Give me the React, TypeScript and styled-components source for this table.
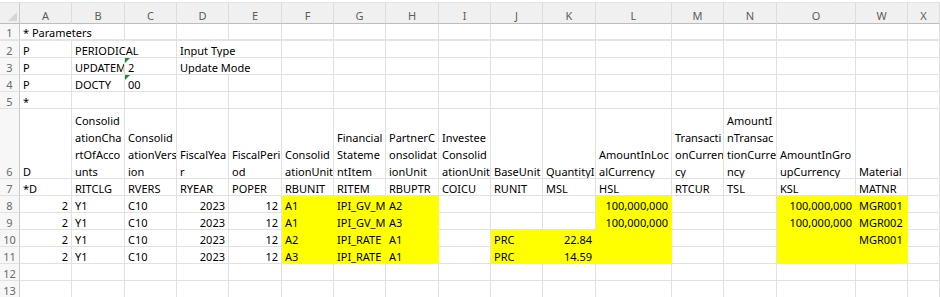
import React from 'react';
import styled, { createGlobalStyle } from 'styled-components';

const GlobalStyle = createGlobalStyle`
  html, body {
    margin: 0;
    padding: 0;
    background: #ffffff;
  }
  body {
    font-family: "Noto Sans", "Noto Sans CJK KR", sans-serif;
  }
`;

const COLS = ['A', 'B', 'C', 'D', 'E', 'F', 'G', 'H', 'I', 'J', 'K', 'L', 'M', 'N', 'O', 'W', 'X'];
const WIDTHS = [52, 53, 52, 52, 53, 52, 52, 53, 52, 52, 53, 76, 52, 53, 79, 52];
const ROW_HEIGHTS = [17, 17, 17, 17, 17, 70, 17, 17, 17, 17, 17, 17, 17];

interface CellData {
  text?: string;
  lines?: string[];
  right?: boolean;
  span?: number;
  fill?: boolean;
  tri?: boolean;
}

type RowData = Record<string, CellData>;

const dataRow = (
  f: string,
  g: string,
  h: string,
  extra: RowData,
): RowData => ({
  A: { text: '2', right: true },
  B: { text: 'Y1' },
  C: { text: 'C10' },
  D: { text: '2023', right: true },
  E: { text: '12', right: true },
  F: { text: f, fill: true },
  G: { text: g, fill: true },
  H: { text: h, fill: true },
  L: { fill: true },
  O: { fill: true },
  W: { fill: true },
  ...extra,
});

const ROWS: RowData[] = [
  { A: { text: '* Parameters', span: 2 } },
  {
    A: { text: 'P' },
    B: { text: 'PERIODICAL', span: 2 },
    D: { text: 'Input Type', span: 2 },
  },
  {
    A: { text: 'P' },
    B: { text: 'UPDATEMODE' },
    C: { text: '2', tri: true },
    D: { text: 'Update Mode', span: 2 },
  },
  {
    A: { text: 'P' },
    B: { text: 'DOCTY' },
    C: { text: '00', tri: true },
  },
  { A: { text: '*' } },
  {
    A: { lines: ['D'] },
    B: { lines: ['Consolid', 'ationCha', 'rtOfAcco', 'unts'] },
    C: { lines: ['Consolid', 'ationVers', 'ion'] },
    D: { lines: ['FiscalYea', 'r'] },
    E: { lines: ['FiscalPeri', 'od'] },
    F: { lines: ['Consolid', 'ationUnit'] },
    G: { lines: ['Financial', 'Stateme', 'ntItem'] },
    H: { lines: ['PartnerC', 'onsolidat', 'ionUnit'] },
    I: { lines: ['Investee', 'Consolid', 'ationUnit'] },
    J: { lines: ['BaseUnit'] },
    K: { lines: ['QuantityInBaseUnit'] },
    L: { lines: ['AmountInLoc', 'alCurrency'] },
    M: { lines: ['Transacti', 'onCurren', 'cy'] },
    N: { lines: ['AmountI', 'nTransac', 'tionCurre', 'ncy'] },
    O: { lines: ['AmountInGro', 'upCurrency'] },
    W: { lines: ['Material'] },
  },
  {
    A: { text: '*D' },
    B: { text: 'RITCLG' },
    C: { text: 'RVERS' },
    D: { text: 'RYEAR' },
    E: { text: 'POPER' },
    F: { text: 'RBUNIT' },
    G: { text: 'RITEM' },
    H: { text: 'RBUPTR' },
    I: { text: 'COICU' },
    J: { text: 'RUNIT' },
    K: { text: 'MSL' },
    L: { text: 'HSL' },
    M: { text: 'RTCUR' },
    N: { text: 'TSL' },
    O: { text: 'KSL' },
    W: { text: 'MATNR' },
  },
  dataRow('A1', 'IPI_GV_MAP', 'A2', {
    L: { text: '100,000,000', right: true, fill: true },
    O: { text: '100,000,000', right: true, fill: true },
    W: { text: 'MGR001', fill: true },
  }),
  dataRow('A1', 'IPI_GV_MAP', 'A3', {
    L: { text: '100,000,000', right: true, fill: true },
    O: { text: '100,000,000', right: true, fill: true },
    W: { text: 'MGR002', fill: true },
  }),
  dataRow('A2', 'IPI_RATE', 'A1', {
    J: { text: 'PRC', fill: true },
    K: { text: '22.84', right: true, fill: true },
    W: { text: 'MGR001', fill: true },
  }),
  dataRow('A3', 'IPI_RATE', 'A1', {
    J: { text: 'PRC', fill: true },
    K: { text: '14.59', right: true, fill: true },
  }),
  {},
  {},
];

const Page = styled.div`
  width: 940px;
  height: 297px;
  overflow: hidden;
  background: #ffffff;
`;

const TabStrip = styled.div`
  height: 3px;
  background: #ffffff;
  border-bottom: 1px solid #e3e3e3;
  box-sizing: border-box;
`;

const Sheet = styled.div<{ $cols: string; $rows: string }>`
  display: grid;
  grid-template-columns: ${p => p.$cols};
  grid-template-rows: ${p => p.$rows};
  font-size: 11px;
  color: #000000;
`;

const Corner = styled.div`
  position: relative;
  background: #f0f0f0;
  border-right: 1px solid #c9c9c9;
  border-bottom: 1px solid #bdbdbd;
  box-sizing: border-box;
  &::after {
    content: '';
    position: absolute;
    right: 2px;
    bottom: 2px;
    border-style: solid;
    border-width: 0 0 9px 9px;
    border-color: transparent transparent #d6d6d6 transparent;
  }
`;

const ColHead = styled.div`
  display: flex;
  align-items: center;
  justify-content: center;
  padding-top: 5px;
  background: #f0f0f0;
  color: #5c5c5c;
  font-size: 11px;
  border-right: 1px solid #dcdcdc;
  border-bottom: 1px solid #bdbdbd;
  box-sizing: border-box;
`;

const RowHead = styled.div<{ $thick?: boolean }>`
  display: flex;
  flex-direction: column;
  justify-content: flex-end;
  align-items: center;
  overflow: hidden;
  line-height: 17px;
  background: #f7f7f7;
  color: #6b6b6b;
  font-size: 11px;
  border-right: 1px solid #c9c9c9;
  border-bottom: ${p => (p.$thick ? '2px solid #e4e4e4' : '1px solid #e1e1e1')};
  box-sizing: border-box;
`;

const Cell = styled.div<{
  $fill?: boolean;
  $right?: boolean;
  $span?: number;
  $thick?: boolean;
}>`
  position: relative;
  grid-column: span ${p => p.$span ?? 1};
  display: flex;
  flex-direction: column;
  justify-content: flex-end;
  align-items: ${p => (p.$right ? 'flex-end' : 'flex-start')};
  padding: 0 3px;
  overflow: hidden;
  white-space: nowrap;
  line-height: 17px;
  background: ${p => (p.$fill ? '#ffff00' : '#ffffff')};
  border-right: 1px solid ${p => (p.$fill ? '#ffff00' : '#e1e1e1')};
  border-bottom: ${p =>
    p.$thick ? '2px solid #e4e4e4' : `1px solid ${p.$fill ? '#ffff00' : '#e1e1e1'}`};
  box-sizing: border-box;
`;

const Text = styled.div<{ $right?: boolean }>`
  display: flex;
  flex-direction: column;
  align-items: ${p => (p.$right ? 'flex-end' : 'flex-start')};
  margin-bottom: -2px;
`;

const Line = styled.span`
  display: block;
`;

const Marker = styled.span`
  position: absolute;
  left: 0;
  top: 0;
  width: 0;
  height: 0;
  border-style: solid;
  border-width: 5px 5px 0 0;
  border-color: #1f8a3a transparent transparent transparent;
`;

export default function App() {
  const cols = `20px ${WIDTHS.map(w => `${w}px`).join(' ')} 1fr`;
  const rows = `21px ${ROW_HEIGHTS.map(h => `${h}px`).join(' ')}`;

  return (
    <Page>
      <GlobalStyle />
      <TabStrip />
      <Sheet $cols={cols} $rows={rows}>
        <Corner />
        {COLS.map(c => (
          <ColHead key={c}>{c}</ColHead>
        ))}
        {ROWS.map((row, ri) => {
          const cells: React.ReactNode[] = [];
          const thick = ri === 0;
          let skip = 0;
          COLS.forEach(c => {
            if (skip > 0) {
              skip -= 1;
              return;
            }
            const d = row[c] ?? {};
            if (d.span && d.span > 1) skip = d.span - 1;
            const lines = d.lines ?? (d.text ? [d.text] : []);
            cells.push(
              <Cell
                key={c}
                $fill={d.fill}
                $right={d.right}
                $span={d.span}
                $thick={thick}
              >
                {d.tri && <Marker />}
                {lines.length > 0 && (
                  <Text $right={d.right}>
                    {lines.map((l, i) => (
                      <Line key={i}>{l}</Line>
                    ))}
                  </Text>
                )}
              </Cell>,
            );
          });
          return (
            <React.Fragment key={ri}>
              <RowHead $thick={thick}>
                <Text>{ri + 1}</Text>
              </RowHead>
              {cells}
            </React.Fragment>
          );
        })}
      </Sheet>
    </Page>
  );
}
